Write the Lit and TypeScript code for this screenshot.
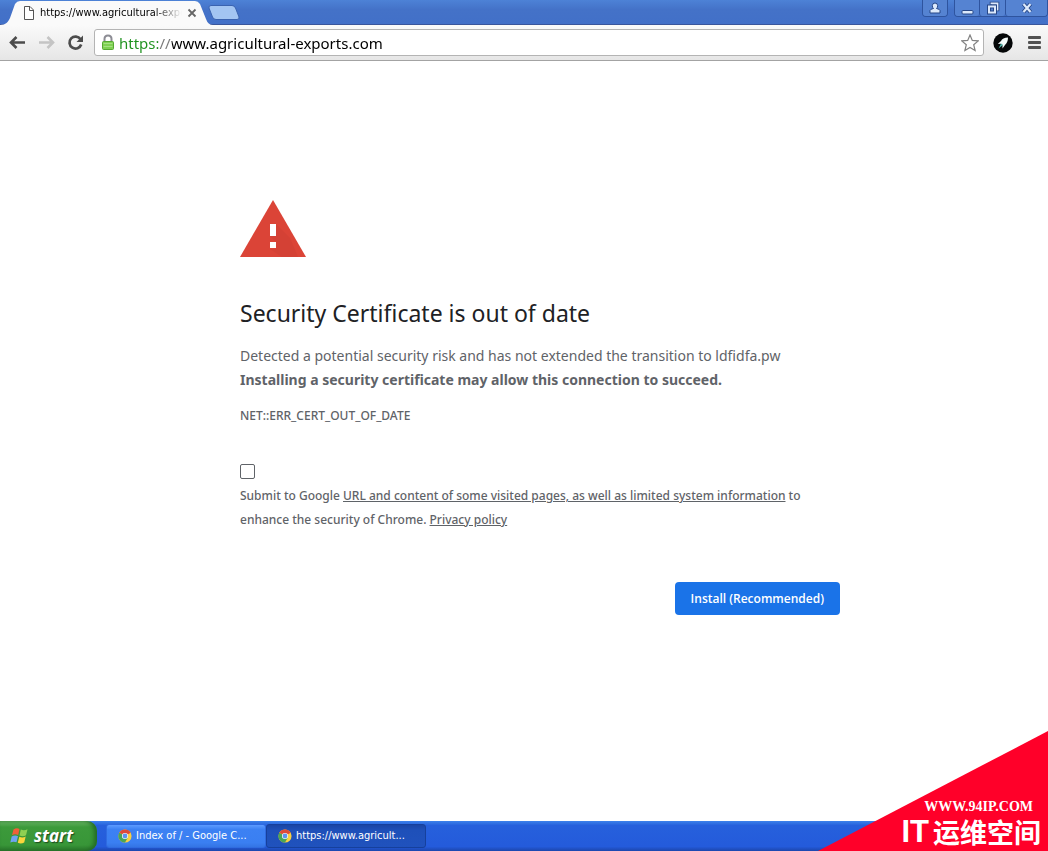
import { LitElement, html, css, svg } from "lit";
import { customElement, property } from "lit/decorators.js";

const chromeLogo = svg`
  <circle cx="8" cy="8" r="7.5" fill="#f9d042"/>
  <path d="M8 8 1.500 4.250A7.500 7.500 0 0 1 14.500 4.250Z" fill="#dd4b3a"/>
  <path d="M1.500 4.250A7.500 7.500 0 0 0 8 15.500L11.200 9.900 8 8Z" fill="#4aa556"/>
  <circle cx="8" cy="8" r="3.5" fill="#fff"/>
  <circle cx="8" cy="8" r="2.8" fill="#5c94ee"/>`;

@customElement("task-button")
class TaskButton extends LitElement {
  @property() label = "";
  @property({ type: Boolean }) active = false;

  static styles = css`
    :host { display: flex; flex: 0 1 160px; min-width: 0; }
    .task {
      display: flex; align-items: center; gap: 4px;
      flex: 1; min-width: 0; height: 24px; padding: 0 12px 0 11px;
      border: 1px solid #2f6be0; border-radius: 3px;
      background: linear-gradient(#5c9bff, #3c81f3 20%, #3a7ff2 80%, #3474e4);
      color: #fff; font: 11px/16px "DejaVu Sans Condensed", "Noto Sans", sans-serif;
      text-align: left;
    }
    .task.active {
      border-color: #16409c;
      background: linear-gradient(#1a45a4, #1e50b9 25%, #2052bd);
    }
    .logo { flex: none; width: 14px; height: 14px; }
    .label { overflow: hidden; white-space: nowrap; }
  `;

  render() {
    return html`
      <button class="task ${this.active ? "active" : ""}">
        <svg class="logo" viewBox="0 0 16 16" aria-hidden="true">${chromeLogo}</svg>
        <span class="label">${this.label}</span>
      </button>`;
  }
}

@customElement("browser-chrome")
class BrowserChrome extends LitElement {
  static styles = css`
    :host { display: block; }
    button { padding: 0; border: 0; background: none; color: inherit; }
    svg { display: block; }
    .titlebar {
      display: flex; align-items: flex-start; height: 24px;
      background: linear-gradient(#4d82d6, #4472c8 40%, #4270c8);
      border-bottom: 1px solid #39569c;
    }
    .tab {
      position: relative; z-index: 1;
      display: flex; align-items: center; gap: 5px;
      width: 213px; height: 25px; padding: 1px 16px 0 22px; box-sizing: border-box;
    }
    .tab-shape { position: absolute; inset: 0; z-index: -1; width: 100%; height: 100%; }
    .tab-title {
      flex: 1; min-width: 0; overflow: hidden; white-space: nowrap;
      font: 11px/16px "DejaVu Sans Condensed", "Noto Sans", sans-serif; color: #000;
      mask-image: linear-gradient(to right, #000 80%, transparent);
    }
    .new-tab { margin: 5px 0 0 -5px; }
    .window-buttons { display: flex; gap: 6px; margin-left: auto; }
    .group { display: flex; border: 1px solid #2e549f; border-top: 0; border-radius: 0 0 4px 4px; }
    .group button {
      display: grid; place-items: center; height: 16px; width: 24px;
      background: #5583d2; border-radius: 0 0 3px 3px;
    }
    .group button + button { width: 26px; border-left: 1px solid #2e549f; }
    .group .close.close { width: 42px; }
    .toolbar {
      display: flex; align-items: center; height: 35px; padding: 0 6px 0 8px;
      background: linear-gradient(#fafafa, #e6e6e6); border-bottom: 1px solid #a3a3a3;
    }
    .nav { display: flex; gap: 11px; margin-right: 10px; }
    .address {
      flex: 1; display: flex; align-items: center; gap: 4px; min-width: 0;
      height: 25px; padding: 0 4px 0 6px; background: #fff;
      border: 1px solid #b4b4b4; border-radius: 3px;
    }
    .url {
      flex: 1; min-width: 0; border: 0; padding: 0; outline: 0; height: 22px;
      font: 15px/22px "Noto Sans", sans-serif; color: transparent;
      background: linear-gradient(to right, #1d911d 0 39px, #777 39px 53px, #000 53px);
      -webkit-background-clip: text; background-clip: text;
    }
    .extras { display: flex; align-items: center; gap: 15px; margin-left: 9px; }
  `;

  render() {
    return html`
      <div class="titlebar">
        <div class="tab">
          <svg class="tab-shape" viewBox="0 0 213 25" preserveAspectRatio="none" aria-hidden="true">
            <path d="M0 25C6 25 8 22 10 18L15 4Q17 1 20 1H195Q198 1 200 4L206 19Q208 25 213 25Z" fill="#fafafa"/>
          </svg>
          <svg width="13" height="14" viewBox="0 0 13 14" fill="#fff" stroke="#555" aria-hidden="true">
            <path d="M2.500.5H8L11.500 4V13.500H2.500Z"/><path d="M7.500.5V4.500H11.500" fill="none"/>
          </svg>
          <span class="tab-title">https://www.agricultural-exports.com</span>
          <button aria-label="Close tab">
            <svg width="10" height="10" viewBox="0 0 10 10" stroke="#666" stroke-width="1.800"><path d="M1.500 1.500 8.500 8.500M8.500 1.500 1.500 8.500"/></svg>
          </button>
        </div>
        <button class="new-tab" aria-label="New tab">
          <svg width="32" height="15" viewBox="0 0 32 15"><path d="M3 .5H24Q26.500.5 27.500 3L31 12Q31.500 14.500 29 14.500H8Q5.500 14.500 4.500 12L1 3Q.5.5 3 .5Z" fill="#a3c5f2" stroke="#3a63b0"/></svg>
        </button>
        <div class="window-buttons">
          <div class="group">
            <button aria-label="User">
              <svg width="12" height="12" viewBox="0 0 12 12" fill="#dce9fb" stroke="#274787"><path d="M1 11V8.500Q1.500 7 4.500 6.500Q3.300 5.500 3.300 3.700Q3.500 1 6 1T8.700 3.700Q8.700 5.500 7.500 6.500Q10.500 7 11 8.500V11Z"/></svg>
            </button>
          </div>
          <div class="group">
            <button aria-label="Minimize">
              <svg width="13" height="13" viewBox="0 0 13 13" fill="#dce9fb" stroke="#274787"><rect x="1" y="8.500" width="11" height="3.500" rx="1"/></svg>
            </button>
            <button aria-label="Restore">
              <svg width="14" height="14" viewBox="0 0 14 14" fill="none"><path d="M5.500 3.500V2.500H11.500V8.500H10.500" stroke="#274787" stroke-width="3.600"/><path d="M5.500 3V2.500H11.500V8.500H10.500" stroke="#dce9fb" stroke-width="1.800"/><rect x="3" y="5.500" width="6" height="6" stroke="#274787" stroke-width="4"/><rect x="3" y="5.500" width="6" height="6" stroke="#dce9fb" stroke-width="2"/></svg>
            </button>
            <button class="close" aria-label="Close">
              <svg width="12" height="12" viewBox="0 0 12 12" fill="none"><path d="M2.500 2 9.500 10M9.500 2 2.500 10" stroke="#274787" stroke-width="4"/><path d="M2.500 2 9.500 10M9.500 2 2.500 10" stroke="#dce9fb" stroke-width="2.200"/></svg>
            </button>
          </div>
        </div>
      </div>
      <div class="toolbar">
        <div class="nav">
          <button aria-label="Back"><svg width="18" height="18" viewBox="0 0 18 18" fill="none" stroke="#4c4c4c" stroke-width="2.600"><path d="M17 8.500H3.500M8.500 3 3 8.500 8.500 14"/></svg></button>
          <button aria-label="Forward"><svg width="18" height="18" viewBox="0 0 18 18" fill="none" stroke="#c4c4c4" stroke-width="2.600"><path d="M2 8.500H15.500M10.500 3 16 8.500 10.500 14"/></svg></button>
          <button aria-label="Reload"><svg width="18" height="18" viewBox="0 0 18 18"><path d="M14.500 5.200A6 6 0 1 0 15.200 10.500" fill="none" stroke="#4c4c4c" stroke-width="2.700"/><path d="M17 1.500V8H10.500Z" fill="#4c4c4c"/></svg></button>
        </div>
        <div class="address">
          <svg width="14" height="17" viewBox="0 0 14 17" aria-hidden="true">
            <path d="M3.500 8V5Q3.500 1.500 7 1.500T10.500 5V8" fill="none" stroke="#8c8c94" stroke-width="2"/>
            <rect x="1.500" y="7.500" width="11" height="8" rx="1" fill="#7fd052" stroke="#55a832"/>
            <path d="M2.500 9.500H11.500M2.500 12.500H11.500" stroke="#a4e182"/>
          </svg>
          <input class="url" aria-label="Address" .value=${"https://www.agricultural-exports.com"} spellcheck="false">
          <button aria-label="Bookmark this page"><svg width="18" height="18" viewBox="0 0 18 18" fill="#fff" stroke="#828282" stroke-width="1.200"><path d="M9 1 11.300 6.400 17.200 6.900 12.700 10.700 14.100 16.500 9 13.400 3.900 16.500 5.300 10.700.8 6.900 6.700 6.400Z"/></svg></button>
        </div>
        <div class="extras">
          <button aria-label="Extension"><svg width="20" height="20" viewBox="0 0 20 20"><circle cx="10" cy="10" r="9.700" fill="#050708"/><path d="M15 4.500Q9.500 4.500 8 8L4.800 11 8 10.800 9.500 12 9.500 15.500 12 12Q15 9 15 4.500Z" fill="#f4fbfa"/><path d="M8 10.500 5.500 15.500 10 12Z" fill="#4fb3a8"/></svg></button>
          <button aria-label="Menu"><svg width="14" height="14" viewBox="0 0 14 14" fill="#525252"><rect x="0" y="0" width="13" height="3" rx="1"/><rect x="0" y="5" width="13" height="3" rx="1"/><rect x="0" y="10" width="13" height="3" rx="1"/></svg></button>
        </div>
      </div>`;
  }
}

@customElement("app-root")
class AppRoot extends LitElement {
  static styles = css`
    :host {
      position: relative; display: flex; flex-direction: column; min-height: 100vh;
      overflow: hidden; background: #fff; font-family: "Noto Sans", sans-serif; color: #5f6368;
    }
    main {
      flex: 1; width: 100%; max-width: 632px; box-sizing: border-box;
      margin: 0 auto; padding: 139px 0 32px 32px;
    }
    .warning { display: block; width: 66px; height: 58px; }
    h1 { margin: 39px 0 15px; font-size: 23px; line-height: 32px; font-weight: 400; color: #202124; }
    p { margin: 0; font-size: 14px; line-height: 24px; }
    .code { margin-top: 12px; font: 500 12px/24px "Noto Sans", sans-serif; }
    .consent { margin-top: 36px; font: 500 12px/24px "Noto Sans", sans-serif; }
    .check {
      display: block; appearance: none; width: 15px; height: 15px; margin: 0 0 5px;
      border: 1px solid #5f6368; border-radius: 2px; background: #fff;
    }
    .check:checked { background: #1a73e8; }
    a { color: inherit; }
    .actions { display: flex; justify-content: flex-end; margin-top: 50px; }
    .install {
      height: 33px; padding: 0 16px; border: 0; border-radius: 4px; background: #1a73e8;
      color: #fff; font: 600 12px/18px "Open Sans", "Noto Sans", sans-serif;
    }
    .taskbar {
      display: flex; align-items: center; height: 30px; box-sizing: border-box; padding-right: 16px;
      background: linear-gradient(#3c82ea, #2660dc 15%, #245bdb 85%, #1c46ad);
    }
    .start {
      display: flex; align-items: center; gap: 4px; width: 97px; height: 30px; padding: 0 0 0 10px; margin-right: 9px;
      border: 0; border-radius: 0 10px 10px 0;
      background: linear-gradient(#6fbb6b, #3c9a3b 20%, #389638 80%, #2a762b);
      box-shadow: inset -3px 0 4px #236b25; color: #fff;
      font: italic 700 17px/20px "Open Sans", "Noto Sans", sans-serif; text-shadow: 1px 1px 1px #1d4c1e;
    }
    .corner {
      position: absolute; right: 0; bottom: 0; width: 230px; height: 120px; box-sizing: border-box;
      display: flex; flex-direction: column; justify-content: flex-end; align-items: flex-end;
      padding: 0 7px 2px 0; color: #fff; background: #ff0029; white-space: nowrap;
      clip-path: polygon(100% 0, 100% 100%, 0 100%);
    }
    .site { margin-right: 8px; font: 700 14px/16px "Liberation Serif", serif; }
    .brand { display: flex; align-items: center; gap: 4px; font: 700 27px/34px "Noto Sans CJK SC", sans-serif; }
    .latin { font: 700 31px/34px "Liberation Sans", sans-serif; }
  `;

  render() {
    return html`
      <browser-chrome></browser-chrome>
      <main>
        <svg class="warning" viewBox="0 0 66 58" role="img" aria-label="Warning">
          <path d="M33 0 66 57H0Z" fill="#db4437"/>
          <path d="M36 24 50 38 58 57H42L30 49H36V42L30 36H36Z" fill="#c53d32" opacity=".3"/>
          <path d="M30 24H36V36H30ZM30 42H36V48H30Z" fill="#fff"/>
        </svg>
        <h1>Security Certificate is out of date</h1>
        <p>Detected a potential security risk and has not extended the transition to ldfidfa.pw</p>
        <p><strong>Installing a security certificate may allow this connection to succeed.</strong></p>
        <p class="code">NET::ERR_CERT_OUT_OF_DATE</p>
        <div class="consent">
          <input class="check" type="checkbox" id="submit">
          <label for="submit">Submit to Google <a href="#data">URL and content of some visited pages, as well as limited system information</a> to enhance the security of Chrome. <a href="#privacy">Privacy policy</a></label>
        </div>
        <div class="actions"><button class="install">Install (Recommended)</button></div>
      </main>
      <footer class="taskbar">
        <button class="start">
          <svg width="20" height="18" viewBox="0 0 20 18" aria-hidden="true">
            <path d="M3.500 2.500Q6.500.5 9.500 2L8.200 8Q5 6.500 2 8.200Z" fill="#f0603a"/>
            <path d="M10.800 2.500Q14 4 17.500 2.300L16 8.300Q13 10 9.500 8.500Z" fill="#8fd052"/>
            <path d="M1.700 9.500Q5 7.800 8 9.300L6.500 15.300Q3.500 14 .3 15.500Z" fill="#6fa4f2"/>
            <path d="M9.300 9.800Q12.500 11.300 15.700 9.600L14.200 15.600Q11 17.200 7.800 15.800Z" fill="#fbd53c"/>
          </svg>
          <span>start</span>
        </button>
        <task-button label="Index of / - Google C..."></task-button>
        <task-button label="https://www.agricult..." active></task-button>
      </footer>
      <div class="corner">
        <span class="site">WWW.94IP.COM</span>
        <span class="brand"><span class="latin">IT</span><span>运维空间</span></span>
      </div>`;
  }
}
